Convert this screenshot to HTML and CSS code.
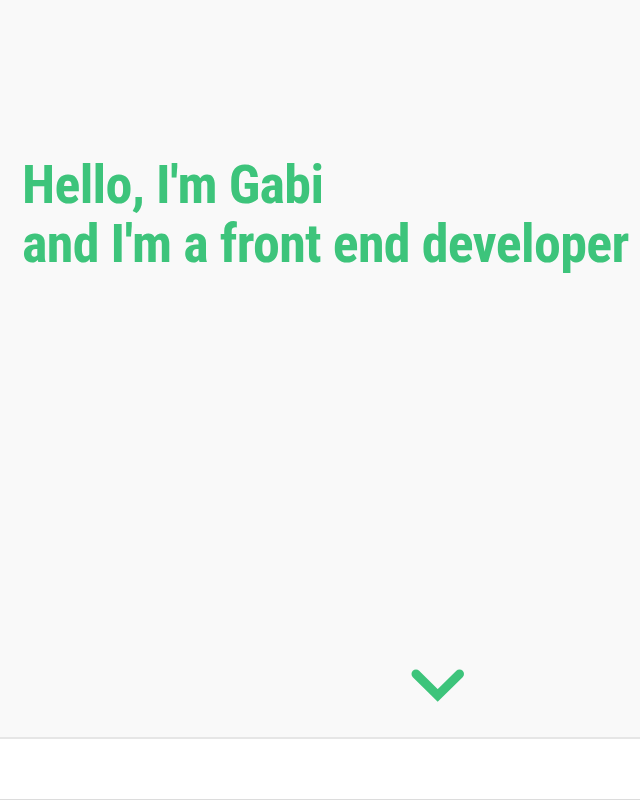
FILE: index.html
```html
<!DOCTYPE html>
<html lang="en">
<head>
<meta charset="utf-8">
<title>Gabi</title>
<link rel="stylesheet" href="styles.css">
</head>
<body>
<header class="hero">
  <h1 class="hero-title">Hello, I'm Gabi<br>and I'm a front end developer</h1>
  <a class="scroll-down" href="#about" aria-label="Scroll down">
    <svg width="56" height="36" viewBox="0 0 56 36"><path d="M6 7 L27.7 28.5 L49.5 7" fill="none" stroke="#3dc47b" stroke-width="9" stroke-linecap="round" stroke-linejoin="miter"/></svg>
  </a>
</header>
<section class="next" id="about"></section>
</body>
</html>
```
FILE: styles.css
```css
html, body {
  margin: 0;
  padding: 0;
}
body {
  background: #ffffff;
  font-family: Roboto, "Liberation Sans", sans-serif;
}
.hero {
  height: 739px;
  background: #f9f9f9;
  border-bottom: 2px solid #e6e6e6;
  display: flex;
  flex-direction: column;
  box-sizing: border-box;
  padding: 155px 0 0 22px;
}
.hero-title {
  margin: 0;
  font-size: 54px;
  line-height: 59px;
  font-weight: 700;
  font-stretch: 75%;
  letter-spacing: -0.67px;
  color: #3dc47b;
  white-space: nowrap;
}
.scroll-down {
  display: block;
  margin: 394px 0 0 388px;
  width: 56px;
  height: 36px;
}
.scroll-down svg {
  display: block;
}
.next {
  height: 60px;
  border-bottom: 1px solid #dcdcdc;
}
```
